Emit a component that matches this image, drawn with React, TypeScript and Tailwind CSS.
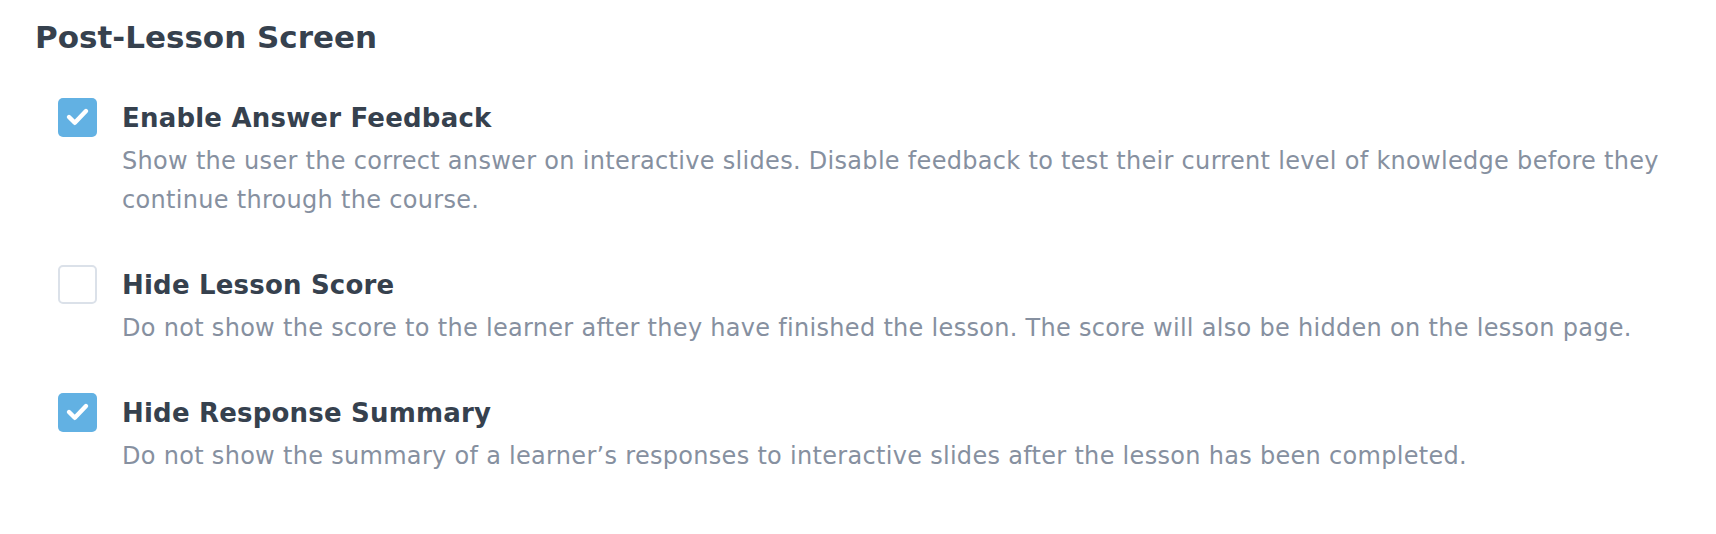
import React from 'react';

interface Setting {
  title: string;
  description: string;
  checked: boolean;
}

const settings: Setting[] = [
  {
    title: 'Enable Answer Feedback',
    description:
      'Show the user the correct answer on interactive slides. Disable feedback to test their current level of knowledge before they continue through the course.',
    checked: true,
  },
  {
    title: 'Hide Lesson Score',
    description:
      'Do not show the score to the learner after they have finished the lesson. The score will also be hidden on the lesson page.',
    checked: false,
  },
  {
    title: 'Hide Response Summary',
    description:
      'Do not show the summary of a learner\u2019s responses to interactive slides after the lesson has been completed.',
    checked: true,
  },
];

function Checkbox({ checked }: { checked: boolean }) {
  if (!checked) {
    return <div className="w-[39px] h-[39px] shrink-0 rounded-[5px] border-2 border-[#dbe1e9] bg-white"></div>;
  }
  return (
    <div className="w-[39px] h-[39px] shrink-0 rounded-[5px] bg-[#62b1e3] flex items-center justify-center">
      <svg width="39" height="39" viewBox="0 0 39 39" fill="none">
        <path
          d="M11 19 L16.8 24.8 L28 13"
          stroke="white"
          strokeWidth="4.4"
          strokeLinecap="round"
          strokeLinejoin="round"
        />
      </svg>
    </div>
  );
}

export default function App() {
  return (
    <div className="w-[1716px] h-[534px] bg-white pl-[35px] pt-[17px] font-['DejaVu_Sans',sans-serif]">
      <h1 className="text-[31px] leading-[40px] font-semibold text-[#36414e]">Post-Lesson Screen</h1>

      <div className="mt-[41px] pl-[23px] flex flex-col gap-[45px]">
        {settings.map(setting => (
          <div key={setting.title} className="flex items-start gap-[25px]">
            <Checkbox checked={setting.checked} />
            <div className="flex flex-col">
              <h2 className="text-[26px] leading-[40px] font-bold text-[#36414e] tracking-[0.2px]">{setting.title}</h2>
              <p className="mt-1 text-[24px] leading-[39px] text-[#8690a0] tracking-[0.3px] max-w-[1570px]">
                {setting.description}
              </p>
            </div>
          </div>
        ))}
      </div>
    </div>
  );
}
